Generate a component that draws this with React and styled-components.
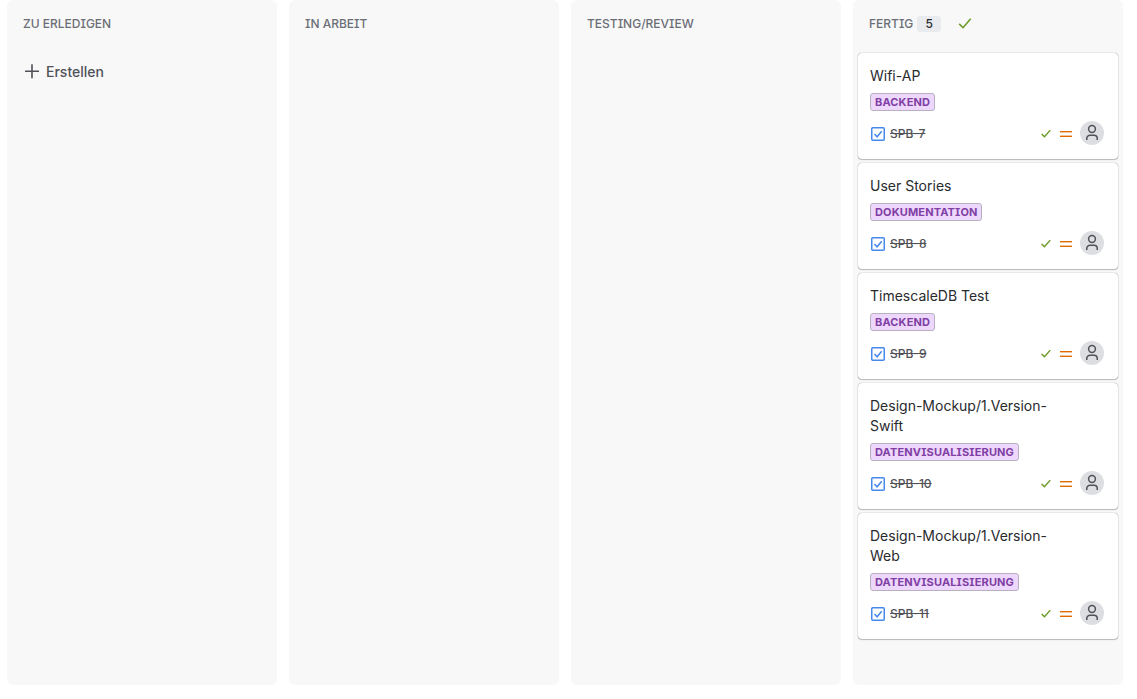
import React from "react";
import styled, { createGlobalStyle } from "styled-components";

const GlobalStyle = createGlobalStyle`
  * { box-sizing: border-box; }
  body {
    margin: 0;
    background: #fff;
    color: #292a2e;
    font-family: Inter, "Liberation Sans", sans-serif;
    font-size: 14px;
    line-height: 20px;
  }
`;

const Board = styled.main`
  display: flex;
  gap: 12px;
  height: 699px;
  padding: 0 0 14px 7px;
  overflow: hidden;
`;

const ColumnBox = styled.section`
  flex: 0 0 270px;
  background: #f8f8f8;
  border-radius: 6px;
`;

const ColumnHeader = styled.header`
  display: flex;
  align-items: center;
  height: 47px;
  padding: 0 16px;
`;

const ColumnTitle = styled.h2`
  margin: 0;
  font-size: 12px;
  font-weight: 500;
  line-height: 16px;
  color: #6b6e76;
  font-feature-settings: "cv08", "ss02";
`;

const Count = styled.span`
  width: 24px;
  height: 16px;
  margin: 0 16px 0 4px;
  border-radius: 3px;
  background: #e9ebee;
  font-size: 12px;
  font-weight: 500;
  line-height: 16px;
  text-align: center;
`;

const CreateButton = styled.button`
  display: flex;
  align-items: center;
  gap: 6px;
  margin: 14px 0 0 17px;
  padding: 0;
  border: 0;
  background: none;
  color: #505258;
  font: 500 14px/22px Inter, sans-serif;
`;

const CardList = styled.div`
  display: flex;
  flex-direction: column;
  gap: 4px;
  padding: 6px 5px 0;
`;

const CardBox = styled.article`
  padding: 13px 14px 14px 12px;
  border-radius: 4px;
  background: #fff;
  box-shadow: 0 1px 1px rgba(30, 31, 33, 0.25), 0 0 1px rgba(30, 31, 33, 0.6);
`;

const CardTitle = styled.div`
  width: 190px;
  margin-bottom: 7px;
`;

const Label = styled.div`
  width: ${(p) => p.$width}px;
  height: 18px;
  margin-bottom: 10px;
  padding-left: 4px;
  border: 1px solid #b7b0be;
  border-radius: 3px;
  background: #eed7fc;
  color: #803fa5;
  font-size: 11px;
  font-weight: 700;
  line-height: 16px;
  white-space: nowrap;
  font-feature-settings: "cv08", "ss02";
  letter-spacing: 0.14px;
`;

const CardFooter = styled.footer`
  display: flex;
  align-items: center;
  height: 24px;
`;

const IssueKey = styled.span`
  flex: 1;
  margin-left: 4px;
  padding-top: 1px;
  color: #505258;
  font-size: 12px;
  font-weight: 500;
  line-height: 16px;
  text-decoration: line-through;
`;

const Avatar = styled.span`
  display: flex;
  width: 24px;
  height: 24px;
  margin-left: 8px;
  border-radius: 50%;
  background: #dddee1;
`;

const Glyph = styled.svg`
  display: block;
  flex: none;
  fill: none;
`;

const Check = ({ size }) => (
  <Glyph width={size} height={size} viewBox="0 0 16 16" stroke="#6a9a23" strokeWidth={size < 16 ? 1.9 : 1.6}>
    <path d="M2.2 7.9 6 11.7 13.7 2.8" />
  </Glyph>
);

const PlusIcon = () => (
  <Glyph width="16" height="16" viewBox="0 0 16 16" stroke="#505258" strokeWidth="1.6">
    <path d="M8 .2v14M1 7.2h14" />
  </Glyph>
);

const TaskIcon = () => (
  <Glyph width="16" height="16" viewBox="0 0 16 16" stroke="#4688ec" strokeWidth="1.5">
    <rect x="1.75" y="1.75" width="12.5" height="12.5" rx="1" />
    <path d="m4.5 8 2.6 2.8 4.6-5.6" />
  </Glyph>
);

const PriorityIcon = () => (
  <Glyph width="12" height="12" viewBox="0 0 12 12">
    <path d="M0 3.5h12M0 8.5h12" stroke="#e06c00" />
    <path d="M0 4.5h12M0 7.5h12" stroke="#e06c00" strokeOpacity="0.4" />
  </Glyph>
);

const PersonIcon = () => (
  <Glyph width="24" height="24" viewBox="0 0 24 24" stroke="#505258" strokeWidth="1.5">
    <circle cx="12" cy="8" r="3.4" />
    <path d="M6.75 19v-1.5a3.25 3.25 0 0 1 3.25-3.25h4a3.25 3.25 0 0 1 3.25 3.25v1.5" />
  </Glyph>
);

const IconGroup = styled.span`
  display: flex;
  align-items: center;
  gap: 8px;
  padding-top: 2px;
`;

const doneCards = [
  { id: "SPB-7", title: "Wifi-AP", label: "BACKEND", width: 65 },
  { id: "SPB-8", title: "User Stories", label: "DOKUMENTATION", width: 112 },
  { id: "SPB-9", title: "TimescaleDB Test", label: "BACKEND", width: 65 },
  { id: "SPB-10", title: "Design-Mockup/1.Version-Swift", label: "DATENVISUALISIERUNG", width: 149 },
  { id: "SPB-11", title: "Design-Mockup/1.Version-Web", label: "DATENVISUALISIERUNG", width: 149 },
];

const Card = ({ card }) => (
  <CardBox>
    <CardTitle>{card.title}</CardTitle>
    <Label $width={card.width}>{card.label}</Label>
    <CardFooter>
      <IconGroup><TaskIcon /></IconGroup>
      <IssueKey>{card.id}</IssueKey>
      <IconGroup>
        <Check size={12} />
        <PriorityIcon />
      </IconGroup>
      <Avatar><PersonIcon /></Avatar>
    </CardFooter>
  </CardBox>
);

export default function App() {
  return (
    <>
      <GlobalStyle />
      <Board>
        <ColumnBox>
          <ColumnHeader><ColumnTitle>ZU ERLEDIGEN</ColumnTitle></ColumnHeader>
          <CreateButton><PlusIcon />Erstellen</CreateButton>
        </ColumnBox>
        <ColumnBox>
          <ColumnHeader><ColumnTitle>IN ARBEIT</ColumnTitle></ColumnHeader>
        </ColumnBox>
        <ColumnBox>
          <ColumnHeader><ColumnTitle>TESTING/REVIEW</ColumnTitle></ColumnHeader>
        </ColumnBox>
        <ColumnBox>
          <ColumnHeader>
            <ColumnTitle>FERTIG</ColumnTitle>
            <Count>5</Count>
            <Check size={16} />
          </ColumnHeader>
          <CardList>
            {doneCards.map((card) => <Card key={card.id} card={card} />)}
          </CardList>
        </ColumnBox>
      </Board>
    </>
  );
}
